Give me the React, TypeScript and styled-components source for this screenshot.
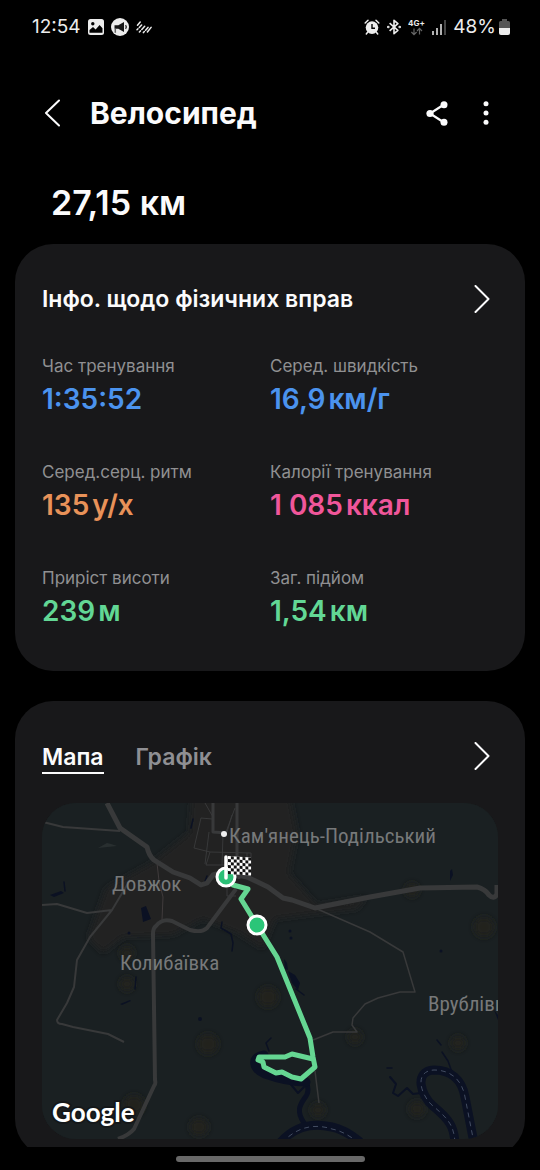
import React, { useState } from "react";
import styled, { createGlobalStyle } from "styled-components";

const GlobalStyle = createGlobalStyle`
  * { box-sizing: border-box; }
  body {
    margin: 0;
    background: #000;
    color: #fbfbfc;
    font-family: Inter, Roboto, "Liberation Sans", sans-serif;
  }
  button {
    margin: 0;
    padding: 0;
    border: 0;
    background: none;
    color: inherit;
    font: inherit;
    cursor: pointer;
  }
  svg { display: block; }
`;

const Screen = styled.div`
  display: flex;
  flex-direction: column;
  height: 100vh;
`;

const StatusBar = styled.div`
  display: flex;
  flex: none;
  align-items: center;
  justify-content: space-between;
  height: 54px;
  padding: 0 30px 0 32px;
`;

const StatusGroup = styled.div`
  display: flex;
  align-items: center;
  gap: 7px;
  color: #ececec;
`;

const StatusText = styled.span`
  font-size: 19px;
  line-height: 24px;
`;

const BatteryStatus = styled.div`
  display: flex;
  align-items: center;
  gap: 3px;
`;

const Header = styled.header`
  display: flex;
  flex: none;
  align-items: center;
  height: 118px;
  padding: 0 40px 0 38px;
`;

const IconButton = styled.button`
  display: flex;
  align-items: center;
  justify-content: center;
  width: 28px;
  height: 40px;
`;

const Title = styled.h1`
  flex: 1;
  margin: 0 0 0 24px;
  font-size: 30px;
  font-weight: 700;
  line-height: 40px;
`;

const HeaderActions = styled.div`
  display: flex;
  gap: 21px;
`;

const Content = styled.main`
  display: flex;
  flex: 1;
  flex-direction: column;
  min-height: 0;
  padding: 0 15px;
  overflow-y: auto;
  scrollbar-width: none;
`;

const Distance = styled.p`
  flex: none;
  margin: 0;
  padding: 11px 36px 21px;
  font-size: 34px;
  font-weight: 600;
  line-height: 40px;
`;

const Card = styled.section`
  flex: none;
  margin-bottom: 30px;
  padding: 36px 27px 0;
  border-radius: 38px;
  background: #18181a;
`;

const InfoCard = styled(Card)`
  padding-bottom: 42px;
`;

const MapCard = styled(Card)`
  margin-bottom: 0;
  padding-bottom: 18px;
`;

const CardHeader = styled.div`
  display: flex;
  align-items: center;
  justify-content: space-between;
  height: 38px;
  padding-right: 2px;
`;

const CardTitle = styled.h2`
  margin: 0;
  font-size: 23px;
  font-weight: 600;
  line-height: 30px;
`;

const StatGrid = styled.dl`
  display: grid;
  grid-template-columns: 1fr 1fr;
  row-gap: 43px;
  margin: 36px 0 0;
`;

const StatLabel = styled.dt`
  color: #909092;
  font-size: 17px;
  line-height: 24px;
`;

const StatValue = styled.dd<{ $color: string }>`
  display: flex;
  gap: 3px;
  margin: 3px 0 0;
  color: ${(p) => p.$color};
  font-size: 28px;
  font-weight: 600;
  line-height: 36px;
`;

const Tabs = styled.div`
  display: flex;
  gap: 32px;
`;

const Tab = styled.button<{ $active: boolean }>`
  height: 36px;
  padding-top: 4px;
  border-bottom: 2px solid ${(p) => (p.$active ? "#fbfbfc" : "transparent")};
  color: ${(p) => (p.$active ? "#fbfbfc" : "#8f8f93")};
  font-size: 23px;
  font-weight: 600;
  line-height: 30px;
`;

const MapFrame = styled.div`
  margin-top: 28px;
  border-radius: 34px;
  background: #1a2022;
  overflow: hidden;
`;

const MapDrawing = styled.svg`
  width: 100%;
  height: auto;
`;

const PlaceName = styled.text`
  fill: #77797a;
  font-family: "Roboto Condensed", "Liberation Sans Narrow", Roboto, sans-serif;
  font-size: 21px;
`;

const MapBrand = styled.text`
  fill: #fff;
  stroke: #15181a;
  stroke-width: 4px;
  paint-order: stroke;
  font-family: Lato, "Open Sans", sans-serif;
  font-size: 26px;
  font-weight: 700;
`;

const NavBar = styled.nav`
  display: flex;
  flex: none;
  align-items: center;
  justify-content: center;
  height: 23px;
`;

const NavHandle = styled.div`
  width: 35%;
  height: 6px;
  border-radius: 3px;
  background: #686868;
`;

const GalleryIcon = () => (
  <svg width="16" height="16" viewBox="0 0 16 16" aria-hidden="true">
    <rect width="16" height="16" rx="2.5" fill="#ececec" />
    <circle cx="4.8" cy="4.8" r="1.7" fill="#000" />
    <path d="M1.5 13.8V11L5 8l2.6 2.4L11.6 6l2.9 3.2v4.6z" fill="#000" />
  </svg>
);

const MegaphoneIcon = () => (
  <svg width="18" height="18" viewBox="0 0 18 18" aria-hidden="true">
    <circle cx="9" cy="9" r="9" fill="#ececec" />
    <path d="M3.500 7.200h3.800L13 4v10l-5.700-3.200H3.500z" fill="#161616" />
    <path d="M4.3 10.800v4" stroke="#666" strokeWidth="1.5" />
    <path d="M14.6 7.200q1.400 1.800 0 3.600" fill="none" stroke="#161616" strokeWidth="1.2" />
  </svg>
);

const StripesIcon = () => (
  <svg width="16" height="13" viewBox="0 0 16 13" fill="none" stroke="#ececec" strokeWidth="1.5" strokeLinecap="round" aria-hidden="true">
    <path d="M1.5 4.2 4.2 1M1 8.8l1-1.1M3.3 6.4 5.6 4M3.4 11l1-1.1M5.8 8.4l2.9-3.2M7.4 11.6l1-1.1M9.6 9.2 12 6.4M11.4 11l3.7-4.6" />
  </svg>
);

const AlarmIcon = () => (
  <svg width="16" height="16" viewBox="0 0 16 16" aria-hidden="true">
    <circle cx="8" cy="8.6" r="6.3" fill="#ececec" />
    <path d="M1.2 4 4 1.3M14.8 4 12 1.3M3.8 13l-1.5 2M12.2 13l1.5 2" stroke="#ececec" strokeWidth="1.5" strokeLinecap="round" />
    <path d="M8 5v4.2h3" fill="none" stroke="#000" strokeWidth="1.4" />
  </svg>
);

const BluetoothIcon = () => (
  <svg width="14" height="16" viewBox="0 0 14 16" fill="none" stroke="#ececec" strokeWidth="1.6" aria-hidden="true">
    <path d="m2.6 4.2 8.3 7.1L7 14.7V1.3l3.9 3.4-8.3 7.1" strokeLinejoin="round" />
    <circle cx="1.3" cy="8" r=".5" />
    <circle cx="12.7" cy="8" r=".5" />
  </svg>
);

const NetworkIcon = () => (
  <svg width="17" height="17" viewBox="0 0 17 17" aria-hidden="true">
    <text x="0" y="7" fill="#ececec" fontFamily="Inter, sans-serif" fontSize="8" fontWeight="700">4G+</text>
    <path d="M6 9.5v6M3.4 13 6 15.6 8.6 13M11.5 15.6v-6M9 12l2.5-2.6L14 12" fill="none" stroke="#666" strokeWidth="1.2" />
  </svg>
);

const SignalIcon = () => (
  <svg width="14" height="15" viewBox="0 0 14 15" aria-hidden="true">
    <path d="M1 15v-4M5 15V8M9 15V4" stroke="#ececec" strokeWidth="1.5" />
    <path d="M13 15V0" stroke="#5c5c5c" strokeWidth="1.5" />
  </svg>
);

const BatteryIcon = () => (
  <svg width="11" height="16" viewBox="0 0 11 16" aria-hidden="true">
    <path d="M3 0h5v2h1.5A1.5 1.5 0 0 1 11 3.5V9H0V3.5A1.5 1.5 0 0 1 1.5 2H3z" fill="#555" />
    <path d="M0 9h11v5a2 2 0 0 1-2 2H2a2 2 0 0 1-2-2z" fill="#ececec" />
  </svg>
);

const BackIcon = () => (
  <svg width="16" height="28" viewBox="0 0 16 28" fill="none" stroke="#fbfbfc" strokeWidth="2" strokeLinecap="round" strokeLinejoin="round" aria-hidden="true">
    <path d="M15 1.5 2 14l13 12.5" />
  </svg>
);

const ForwardIcon = () => (
  <svg width="16" height="28" viewBox="0 0 16 28" fill="none" stroke="#fbfbfc" strokeWidth="2" strokeLinecap="round" strokeLinejoin="round" aria-hidden="true">
    <path d="m1.5 1 13 13-13 13" />
  </svg>
);

const ShareIcon = () => (
  <svg width="22" height="25" viewBox="0 0 22 25" aria-hidden="true">
    <path d="M18 3.5 4 12.5l14 9" fill="none" stroke="#fbfbfc" strokeWidth="2.2" />
    <circle cx="18" cy="3.8" r="3.5" fill="#fbfbfc" />
    <circle cx="4" cy="12.5" r="3.6" fill="#fbfbfc" />
    <circle cx="18" cy="21.2" r="3.5" fill="#fbfbfc" />
  </svg>
);

const MoreIcon = () => (
  <svg width="6" height="24" viewBox="0 0 6 24" fill="#fbfbfc" aria-hidden="true">
    <circle cx="3" cy="2.7" r="2.5" />
    <circle cx="3" cy="12" r="2.5" />
    <circle cx="3" cy="21.3" r="2.5" />
  </svg>
);

const stats = [
  { label: "Час тренування", value: "1:35:52", unit: "", color: "#4b93ee" },
  { label: "Серед. швидкість", value: "16,9", unit: "км/г", color: "#4b93ee" },
  { label: "Серед.серц. ритм", value: "135", unit: "у/х", color: "#e89259" },
  { label: "Калорії тренування", value: "1 085", unit: "ккал", color: "#f0569a" },
  { label: "Приріст висоти", value: "239", unit: "м", color: "#62d795" },
  { label: "Заг. підйом", value: "1,54", unit: "км", color: "#62d795" },
];

const flagRows = [0, 1, 2, 3, 4, 5];
const flagColumns = [0, 1, 2, 3, 4, 5, 6, 7];

const RouteMap = () => (
  <MapDrawing viewBox="0 0 456 336" role="img" aria-label="Мапа маршруту">
    <defs>
      <filter id="soft" x="-20%" y="-20%" width="140%" height="140%">
        <feGaussianBlur stdDeviation="3" />
      </filter>
    </defs>
    <rect width="456" height="336" fill="#1a2022" />
    <path
      d="M150-10h97l8 40-8 40 28 32 50-8-10 12-52 6-30 4-12 30-25-16-35-14-30 16-50 2-20 16-15-15 18-50 45-25 38-30z"
      fill="#212122"
      filter="url(#soft)"
    />
    <g fill="#21211f" filter="url(#soft)">
      <circle cx="85" cy="150" r="7" />
      <circle cx="85" cy="181" r="7" />
      <circle cx="166" cy="241" r="10" />
      <circle cx="226" cy="194" r="10" />
      <circle cx="442" cy="124" r="10" />
      <circle cx="370" cy="87" r="7" />
      <circle cx="416" cy="240" r="7" />
      <circle cx="375" cy="306" r="8" />
      <circle cx="313" cy="234" r="7" />
      <circle cx="92" cy="302" r="10" />
      <circle cx="157" cy="324" r="9" />
      <circle cx="276" cy="307" r="7" />
    </g>

    <g fill="#0b1123">
      <path d="m99 105 5-2 5 13-8 3zM8 92l11-4 3 2-10 4zM408 68l2-2 1 6-3 6zM246 168l7 4 5 8-2 7-6-7zM78 201l10-4 1 1-9 4zM452 207l4 5v5zM242 156l3 4 1 7-3-1z" />
      <circle cx="87" cy="130" r="1.5" />
      <circle cx="158" cy="216" r="2" />
      <circle cx="248" cy="128" r="1.5" />
      <circle cx="249" cy="135" r="1.5" />
      <circle cx="399" cy="148" r="1.5" />
    </g>
    <g fill="none" stroke="#0b1123" strokeLinecap="round" strokeLinejoin="round">
      <path d="m22 79 1 9M180 119l-1 6 10 6 2 9-1 8M165 73l-3 8M151 16l-2 9M94 174l-1 12M400 249l6 9 5 14M395 237l4 5M227 248l-3-8 5-5M345 265h5M254 186l8 6" strokeWidth="1.5" />
      <path d="m348 274 6 7-3 9 5 3 9-8 6 6 8-1M246 278l10 12 6-6" strokeWidth="2" />
      <path d="M262 320c-8-12-4-18 0-24 6-7 4-12 2-18" strokeWidth="5" />
      <path d="M222 252c-14 2-11 14 1 19 14 5 26 8 41 8" strokeWidth="9" />
      <path d="M238 340c16-19 35-20 52-16 10 2 18 7 27 14" strokeWidth="9" />
      <path d="M413 340c-1-16-5-23-22-37-12-10-20-35 1-36 17 0 28 10 31 27l9 46" strokeWidth="9" />
    </g>
    <g fill="none" stroke="#434d62" strokeDasharray="5 4">
      <path d="M240 340c16-18 35-19 50-14 10 2 18 7 27 14" />
      <path d="M413 340c-1-16-5-23-22-37-12-10-20-35 1-36 17 0 28 10 31 27l9 46" />
    </g>

    <g fill="none" stroke="#38393a" strokeLinejoin="round">
      <path d="m159 15-7 30 16 4 41 1v22M168 49l-4 13h40M167 29l-4 32M159 15l11 1M181 32l-1 30M185 75v18h9M163 0l8 14M193 5l-9 24M190 12l-5 17M205 50v26" strokeWidth="1" />
      <path d="m115 60 2 18 4 16-1 23" strokeWidth="1" stroke="#403b3c" />
      <path d="m1 19 20 5 57 4M0 102l15-1 30 9 25-3M88 77l-18 30-22 27-13 23-3 27-7 16-10 17c0 3 2 4 5 4l11 3 35 7 16 8" strokeWidth="2" />
      <path d="m273 105 55 24 33 20 12 40h-15l-22 6-13 6-12 14-1 7 5 7h-24l-20 8M273 268l4 32" strokeWidth="1.5" />
      <path d="M171 0v29l14 1M195 0v52l2 24" strokeWidth="3" />
      <path d="M194 86 165 125q-5 5-17 2l-18-9q-10-3-16 5-3 2-3 8l2 146q1 4-1 6l-20 43q-5 6-16 10" strokeWidth="4" />
      <path d="M65 0 78 25l27 19q2 9 7 13l19 12 17 6 11 7 6-2 6-8 10-3 24 5 21 10 15 11 9 2 23 8 5-1 50-10 50-9 57-1q8 2 12 8 5 5 8-1V82" strokeWidth="5" />
    </g>
    <path d="m56 45 9-5 4 1 6 2z" fill="#292f30" />

    <circle cx="182" cy="31" r="3" fill="#eee" />
    <PlaceName x="187" y="40">Кам'янець-Подільський</PlaceName>
    <PlaceName x="70" y="88">Довжок</PlaceName>
    <PlaceName x="78" y="167">Колибаївка</PlaceName>
    <PlaceName x="386" y="208">Врублівці</PlaceName>

    <path d="m185 75 6 7 15 4-7 10 16 26 20 32 33 81 3 19 2 10-14 12-9-2-10-5-6 1-12-6-1-5-5-2 1-3 26 0 7-3 21 5" fill="none" stroke="#65d692" strokeWidth="5" strokeLinejoin="round" strokeLinecap="round" />
    <circle cx="184" cy="74" r="9" fill="#2abf76" stroke="#fff" strokeWidth="3" />
    <circle cx="215" cy="122" r="9" fill="#2bc578" stroke="#fff" strokeWidth="3" />
    <g transform="translate(186 53) skewY(4)">
      <rect width="23" height="18" fill="#fff" />
      {flagRows.map((row) =>
        flagColumns
          .filter((column) => (row + column) % 2 === 1)
          .map((column) => (
            <rect key={`${row}-${column}`} x={column * 2.9} y={row * 3} width="2.9" height="3" fill="#111" />
          ))
      )}
    </g>
    <path d="M184 54v21" stroke="#fff" strokeWidth="3.5" strokeLinecap="round" />
    <MapBrand x="10" y="319">Google</MapBrand>
  </MapDrawing>
);

export default function App() {
  const [tab, setTab] = useState("Мапа");

  return (
    <>
      <GlobalStyle />
      <Screen>
        <StatusBar>
          <StatusGroup>
            <StatusText>12:54</StatusText>
            <GalleryIcon />
            <MegaphoneIcon />
            <StripesIcon />
          </StatusGroup>
          <StatusGroup>
            <AlarmIcon />
            <BluetoothIcon />
            <NetworkIcon />
            <SignalIcon />
            <BatteryStatus>
              <StatusText>48%</StatusText>
              <BatteryIcon />
            </BatteryStatus>
          </StatusGroup>
        </StatusBar>
        <Header>
          <IconButton aria-label="Назад">
            <BackIcon />
          </IconButton>
          <Title>Велосипед</Title>
          <HeaderActions>
            <IconButton aria-label="Поділитися">
              <ShareIcon />
            </IconButton>
            <IconButton aria-label="Інші опції">
              <MoreIcon />
            </IconButton>
          </HeaderActions>
        </Header>
        <Content>
          <Distance>27,15 км</Distance>
          <InfoCard>
            <CardHeader>
              <CardTitle>Інфо. щодо фізичних вправ</CardTitle>
              <IconButton aria-label="Докладніше про вправу">
                <ForwardIcon />
              </IconButton>
            </CardHeader>
            <StatGrid>
              {stats.map((stat) => (
                <div key={stat.label}>
                  <StatLabel>{stat.label}</StatLabel>
                  <StatValue $color={stat.color}>
                    <span>{stat.value}</span>
                    {stat.unit && <span>{stat.unit}</span>}
                  </StatValue>
                </div>
              ))}
            </StatGrid>
          </InfoCard>
          <MapCard>
            <CardHeader>
              <Tabs role="tablist">
                {["Мапа", "Графік"].map((name) => (
                  <Tab key={name} role="tab" aria-selected={tab === name} $active={tab === name} onClick={() => setTab(name)}>
                    {name}
                  </Tab>
                ))}
              </Tabs>
              <IconButton aria-label="Відкрити мапу">
                <ForwardIcon />
              </IconButton>
            </CardHeader>
            <MapFrame>
              <RouteMap />
            </MapFrame>
          </MapCard>
        </Content>
        <NavBar>
          <NavHandle />
        </NavBar>
      </Screen>
    </>
  );
}
